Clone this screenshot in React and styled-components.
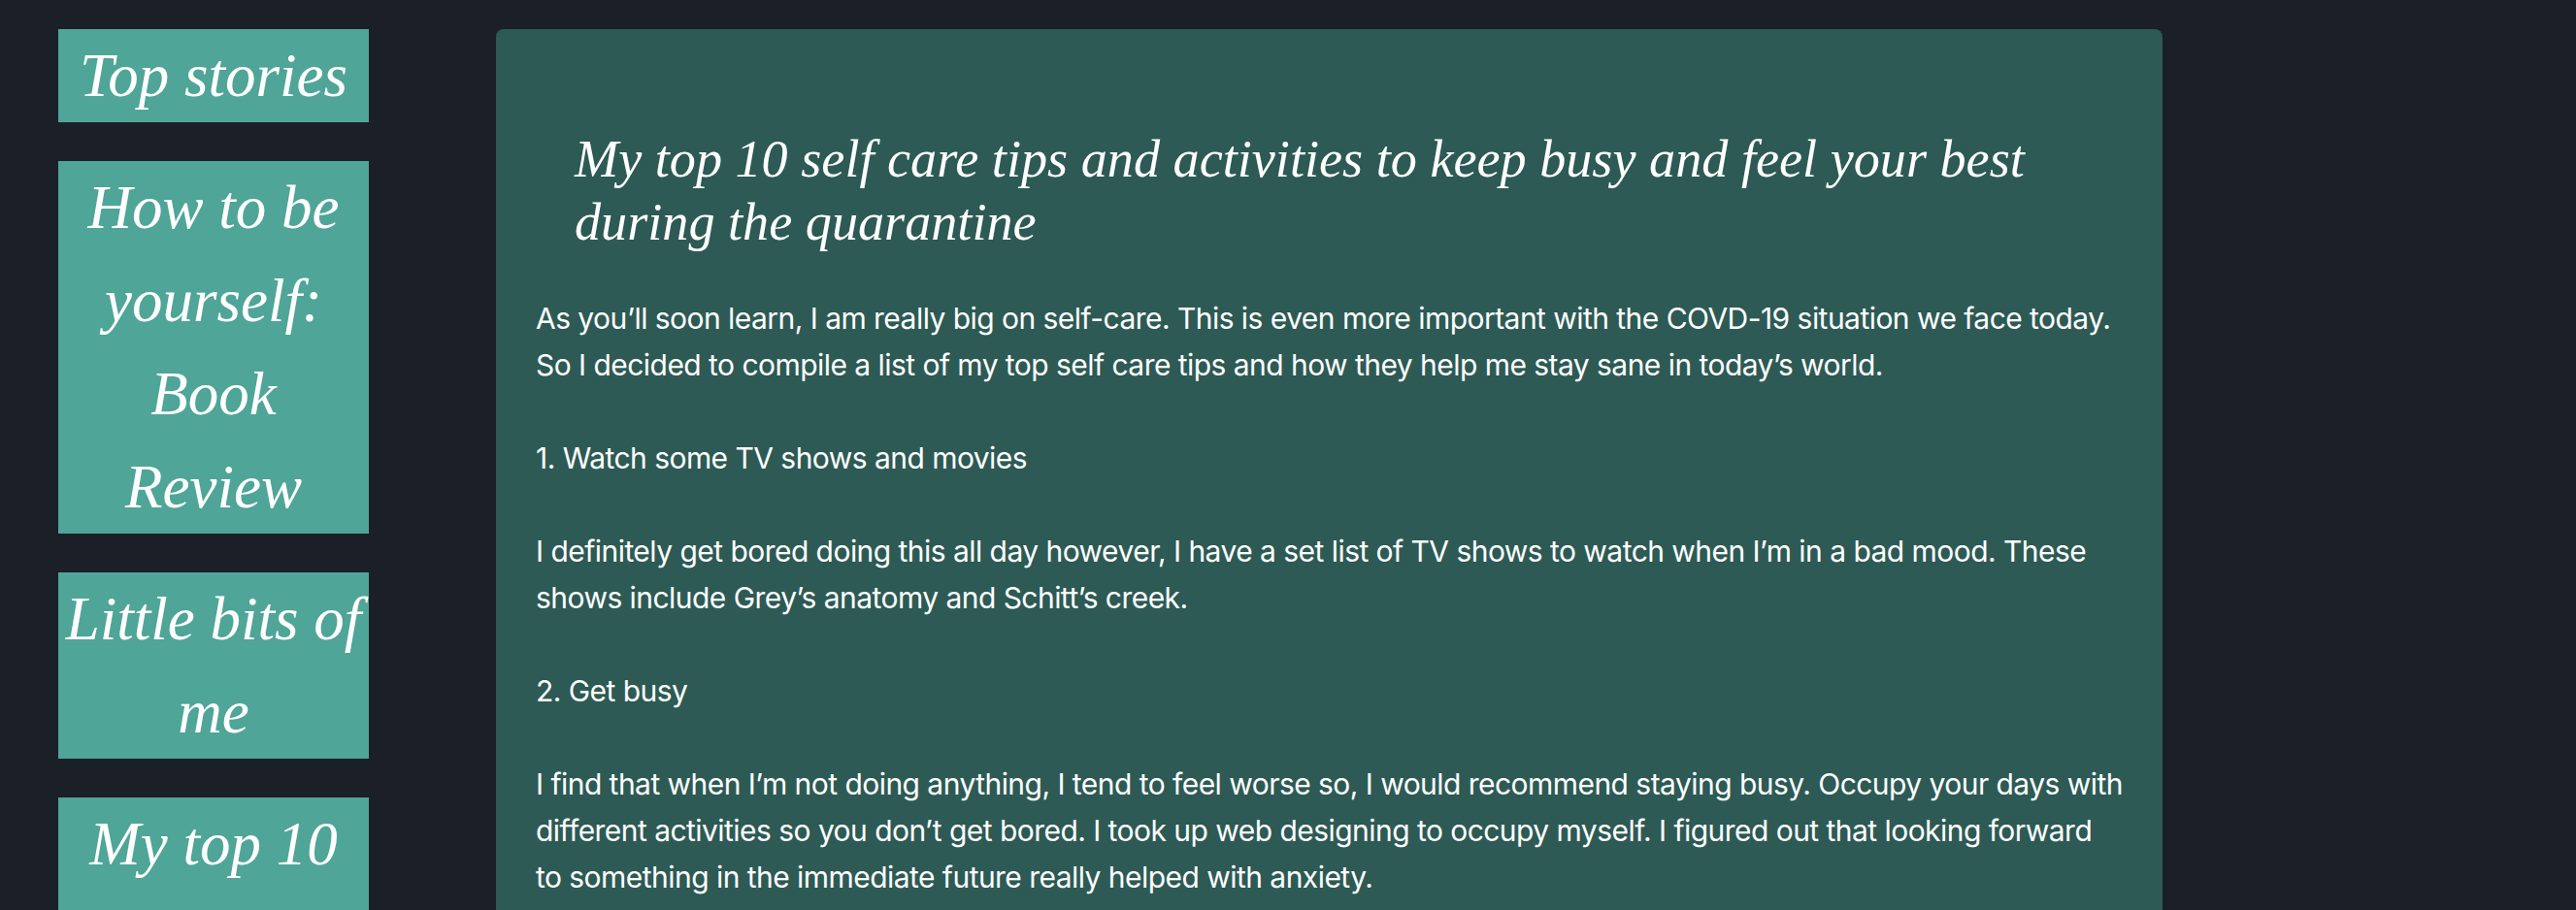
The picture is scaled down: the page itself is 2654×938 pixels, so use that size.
import React from "react";
import styled, { createGlobalStyle } from "styled-components";

const Global = createGlobalStyle`
  html, body { margin: 0; padding: 0; background: #1b1f27; height: 938px; overflow: hidden; }
  #root { height: 938px; overflow: hidden; }
`;
const Page = styled.div`
  display: flex;
  align-items: flex-start;
  height: 938px;
  overflow: hidden;
  padding: 30px 0 0 60px;
  box-sizing: border-box;
  background: #1b1f27;
  color: #fff;
`;
const Sidebar = styled.nav`
  width: 320px;
  flex: none;
  display: flex;
  flex-direction: column;
  gap: 40px;
  margin-right: 131px;
`;
const StoryLink = styled.a`
  display: block;
  background: #4fa597;
  color: #fff;
  text-align: center;
  font-family: "Liberation Serif", serif;
  font-style: italic;
  font-size: 63px;
  line-height: 96px;
`;
const Panel = styled.article`
  width: 1717px;
  flex: none;
  box-sizing: border-box;
  background: #2d5a54;
  border-radius: 8px;
  padding: 102px 40px 40px 41px;
`;
const Title = styled.h1`
  margin: 0 0 42px;
  padding: 0 40px;
  font-family: "Liberation Serif", serif;
  font-style: italic;
  font-weight: 400;
  font-size: 54.2px;
  line-height: 65px;
`;
const Body = styled.p`
  margin: 0 0 48px;
  font-family: Inter, sans-serif;
  font-size: 30px;
  line-height: 48px;
  letter-spacing: -0.54px;
`;

const stories = ["Top stories", "How to be yourself: Book Review", "Little bits of me", "My top 10 self care tips"];
const paragraphs = [
  "As you’ll soon learn, I am really big on self-care. This is even more important with the COVD-19 situation we face today. So I decided to compile a list of my top self care tips and how they help me stay sane in today’s world.",
  "1. Watch some TV shows and movies",
  "I definitely get bored doing this all day however, I have a set list of TV shows to watch when I’m in a bad mood. These shows include Grey’s anatomy and Schitt’s creek.",
  "2. Get busy",
  "I find that when I’m not doing anything, I tend to feel worse so, I would recommend staying busy. Occupy your days with different activities so you don’t get bored. I took up web designing to occupy myself. I figured out that looking forward to something in the immediate future really helped with anxiety.",
];

export default function App() {
  return (
    <Page>
      <Global />
      <Sidebar>
        {stories.map((s) => (
          <StoryLink key={s}>{s}</StoryLink>
        ))}
      </Sidebar>
      <Panel>
        <Title>My top 10 self care tips and activities to keep busy and feel your best during the quarantine</Title>
        {paragraphs.map((p) => (
          <Body key={p}>{p}</Body>
        ))}
      </Panel>
    </Page>
  );
}
